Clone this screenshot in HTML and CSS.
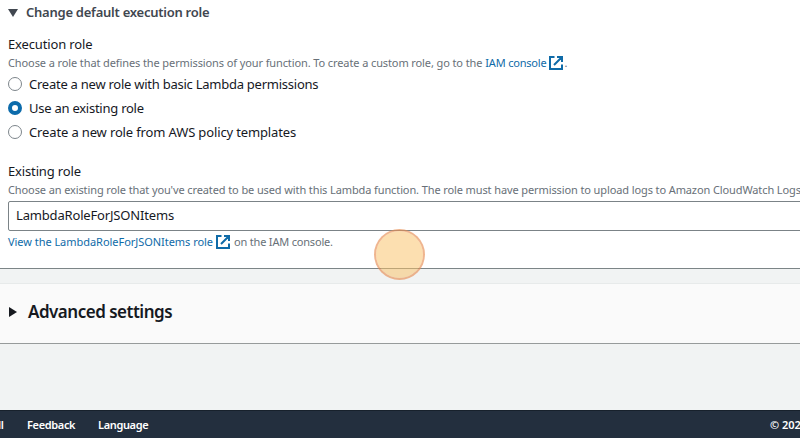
FILE: index.html
```
<!DOCTYPE html>
<html lang="en">
<head>
<meta charset="utf-8">
<title>Create function</title>
<link rel="stylesheet" href="styles.css">
</head>
<body>
<main class="page">
  <section class="panel">
    <div class="expander"><svg class="caret-down" viewBox="0 0 10 8"><path d="M0 0H10L5 8Z"/></svg><h3 class="expander-title">Change default execution role</h3></div>
    <div class="label">Execution role</div>
    <p class="hint"><span class="t-choose">Choose a role that defines the permissions of your function. To create a custom role, go to the</span><a class="link"><span class="t-iam">IAM console</span><svg class="external" viewBox="0 0 14 14"><path d="M5.5 1H1V13H13V8.5M8 1H13V6M13 1L5 9"/></svg></a><span class="period">.</span></p>
    <div class="option"><i class="radio"></i><span class="t-basic">Create a new role with basic Lambda permissions</span></div>
    <div class="option"><i class="radio checked"></i><span class="t-use">Use an existing role</span></div>
    <div class="option"><i class="radio"></i><span class="t-templates">Create a new role from AWS policy templates</span></div>
    <div class="label second">Existing role</div>
    <p class="hint second-hint"><span class="t-existing">Choose an existing role that you've created to be used with this Lambda function. The role must have permission to upload logs to Amazon CloudWatch Logs</span></p>
    <div class="select"><span class="t-value">LambdaRoleForJSONItems</span></div>
    <p class="hint view"><a class="link"><span class="t-view">View the LambdaRoleForJSONItems role</span><svg class="external" viewBox="0 0 14 14"><path d="M5.5 1H1V13H13V8.5M8 1H13V6M13 1L5 9"/></svg></a><span class="t-on">on the IAM console.</span></p>
    <div class="click-marker"></div>
  </section>
  <section class="advanced"><svg class="caret-right" viewBox="0 0 8 10"><path d="M0 0L8 5L0 10Z"/></svg><h2 class="advanced-title">Advanced settings</h2></section>
  <footer class="footer"><span class="all">ll</span><span class="feedback">Feedback</span><span class="language">Language</span><span class="copyright">© 202</span></footer>
</main>
</body>
</html>
```
FILE: styles.css
```
* { box-sizing: border-box; }
body { margin: 0; background: #f1f3f3; font-family: "Noto Sans", "Open Sans", sans-serif; color: #16191f; }
.page { width: 800px; height: 438px; overflow: hidden; display: flex; flex-direction: column; white-space: nowrap; }
.panel { position: relative; height: 269px; flex: none; background: #fff; border-bottom: 1px solid #7c8587; padding: 3px 0 0 8px; }
.expander { display: flex; align-items: center; height: 20px; }
.caret-down { width: 10px; height: 8px; margin-right: 8px; fill: #414750; }
.expander-title { margin: 0; font-size: 13px; line-height: 18px; padding-bottom: 2px; font-weight: 600; color: #414750; letter-spacing: -0.25px; }
.label { height: 18px; margin-top: 12px; font-size: 13px; line-height: 18px; letter-spacing: -0.15px; }
.hint { display: flex; align-items: center; height: 19px; margin: 0; font-size: 11px; line-height: 19px; color: #687078; }
.link { display: flex; align-items: center; gap: 3px; margin-left: 3px; color: #0f6ba8; }
.external { width: 14px; height: 14px; flex: none; fill: none; stroke: currentColor; stroke-width: 2; }
.period { margin-left: 1px; }
.option { display: flex; align-items: center; height: 24.2px; font-size: 13px; line-height: 20px; }
.radio { width: 14px; height: 14px; flex: none; margin-right: 7px; border: 1px solid #7d858b; border-radius: 50%; background: #fff; }
.radio.checked { border: 4.5px solid #0c6bab; }
.second { margin-top: 17px; }
.second-hint { padding-top: 1px; }
.t-choose { letter-spacing: -0.105px; }
.t-iam { letter-spacing: -0.2px; }
.t-basic, .t-use { letter-spacing: -0.25px; }
.t-templates { letter-spacing: -0.14px; }
.t-existing { letter-spacing: -0.108px; }
.t-value { letter-spacing: -0.17px; }
.t-view { letter-spacing: -0.04px; }
.t-on { letter-spacing: -0.19px; }
.select { display: flex; align-items: center; width: 810px; height: 30px; margin-top: 2px; padding: 0 0 1px 7px; border: 1px solid #7b8387; border-radius: 2px; font-size: 13px; }
.view { margin-top: 1px; }
.view .link { margin: 0 4px 0 0; }
.view .external { margin-top: 1px; }
.click-marker { position: absolute; left: 374px; top: 229px; width: 51px; height: 51px; border: 2px solid rgba(231, 141, 83, .65); border-radius: 50%; background: rgba(249, 194, 103, .52); background-clip: padding-box; }
.advanced { display: flex; align-items: center; flex: none; height: 61px; margin-top: 14px; padding-left: 9px; background: #fafafa; border-top: 1px solid #e7eaea; border-bottom: 1px solid #979b9b; padding-bottom: 4px; }
.caret-right { width: 8px; height: 10px; margin-right: 11px; fill: #16191f; }
.advanced-title { margin: 0; font-size: 17px; font-weight: 600; line-height: 24px; letter-spacing: -0.5px; }
.footer { display: flex; align-items: center; height: 28px; flex: none; margin-top: auto; background: #232f3e; border-top: 1px solid #17212c; color: #fff; font-size: 11px; font-weight: 600; letter-spacing: -0.35px; }
.all { width: 29px; margin-left: -2px; }
.feedback { width: 71px; }
.copyright { width: 30px; margin-left: auto; letter-spacing: 0; }
```
